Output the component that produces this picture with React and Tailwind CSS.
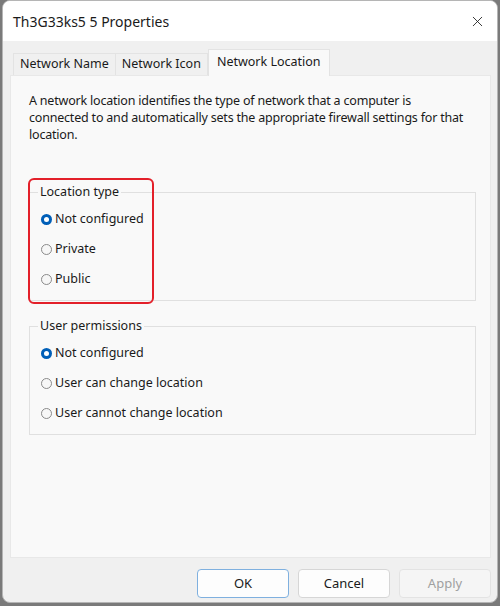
import React from "react";
import { X } from "lucide-react";

const font = { fontFamily: '"Segoe UI", "Noto Sans", "Open Sans", sans-serif' };

function Radio({ checked, label }) {
  return (
    <div className="flex items-center h-[30px] gap-[3px]">
      {checked ? (
        <span className="w-[11px] h-[11px] rounded-full bg-[#005fb8] flex items-center justify-center">
          <span className="w-[5px] h-[5px] rounded-full bg-white" />
        </span>
      ) : (
        <span className="w-[11px] h-[11px] rounded-full border border-[#8a8a8a] bg-[#f7f7f7]" />
      )}
      <span className="text-[12.5px] text-[#1a1a1a]">{label}</span>
    </div>
  );
}

function Group({ title, options, highlight }) {
  return (
    <div className="relative">
      <fieldset className="border border-[#e0e0e0] h-[117px] pl-[11px] pt-[4px]">
        <legend className="ml-[-3px] px-[2px] text-[12.5px] text-[#1a1a1a] leading-[16px]">{title}</legend>
        {options.map((o, i) => (
          <Radio key={o} checked={i === 0} label={o} />
        ))}
      </fieldset>
      {highlight && (
        <div className="absolute left-[-1px] top-[-6px] w-[126px] h-[126px] rounded-[6px] border-2 border-[#e3202a]" />
      )}
    </div>
  );
}

export default function App() {
  return (
    <div className="w-[500px] h-[606px] bg-[#7a7a7a] overflow-hidden" style={font}>
      <div className="ml-[2px] w-[496px] h-[603px] rounded-[8px] border border-[#b5b5b5] bg-[#f0f0f0] overflow-hidden flex flex-col">
        {/* Title bar */}
        <div className="h-[40px] bg-white flex items-center justify-between pl-[10px] pr-[11px] shrink-0">
          <span className="text-[14px] text-[#1a1a1a]">Th3G33ks5 5 Properties</span>
          <X size={17} strokeWidth={1.2} className="text-[#1a1a1a]" />
        </div>

        <div className="px-[7px] pt-[8px] flex flex-col flex-1">
          {/* Tabs */}
          <div className="flex items-end pl-[3px] h-[26px] relative z-10">
            <div className="h-[22px] px-[6px] border border-b-0 border-[#e3e3e3] text-[12.5px] text-[#1a1a1a] flex items-center">Network Name</div>
            <div className="h-[22px] px-[6px] border border-b-0 border-l-0 border-[#e3e3e3] text-[12.5px] text-[#1a1a1a] flex items-center">Network Icon</div>
            <div className="h-[27px] mb-[-1px] px-[8px] bg-[#f9f9f9] border border-b-0 border-[#e3e3e3] text-[12.5px] text-[#1a1a1a] flex items-start pt-[3px]">Network Location</div>
          </div>

          {/* Panel */}
          <div className="h-[483px] w-[481px] bg-[#f9f9f9] border border-[#e8e8e8] pl-[18px] pt-[16px]">
            <p className="w-[462px] text-[12.5px] leading-[17px] tracking-[-0.2px] text-[#1a1a1a]">
              A network location identifies the type of network that a computer is<br />
              connected to and automatically sets the appropriate firewall settings for that location.
            </p>
            <div className="w-[447px] mt-[41px]">
              <Group title="Location type" options={["Not configured", "Private", "Public"]} highlight />
            </div>
            <div className="w-[447px] mt-[17px]">
              <Group title="User permissions" options={["Not configured", "User can change location", "User cannot change location"]} />
            </div>
          </div>

          {/* Buttons */}
          <div className="flex justify-end gap-[9px] mr-[-1px] mt-[11px]">
            <button className="w-[92px] h-[29px] rounded-[4px] border border-[#7fb0df] bg-[#fdfdfd] text-[13px] text-[#1a1a1a]">OK</button>
            <button className="w-[92px] h-[29px] rounded-[4px] border border-[#d6d6d6] bg-[#fdfdfd] text-[13px] text-[#1a1a1a]">Cancel</button>
            <button className="w-[92px] h-[29px] rounded-[4px] border border-[#e3e3e3] bg-[#f5f5f5] text-[13px] text-[#a0a0a0]">Apply</button>
          </div>
        </div>
      </div>
    </div>
  );
}
